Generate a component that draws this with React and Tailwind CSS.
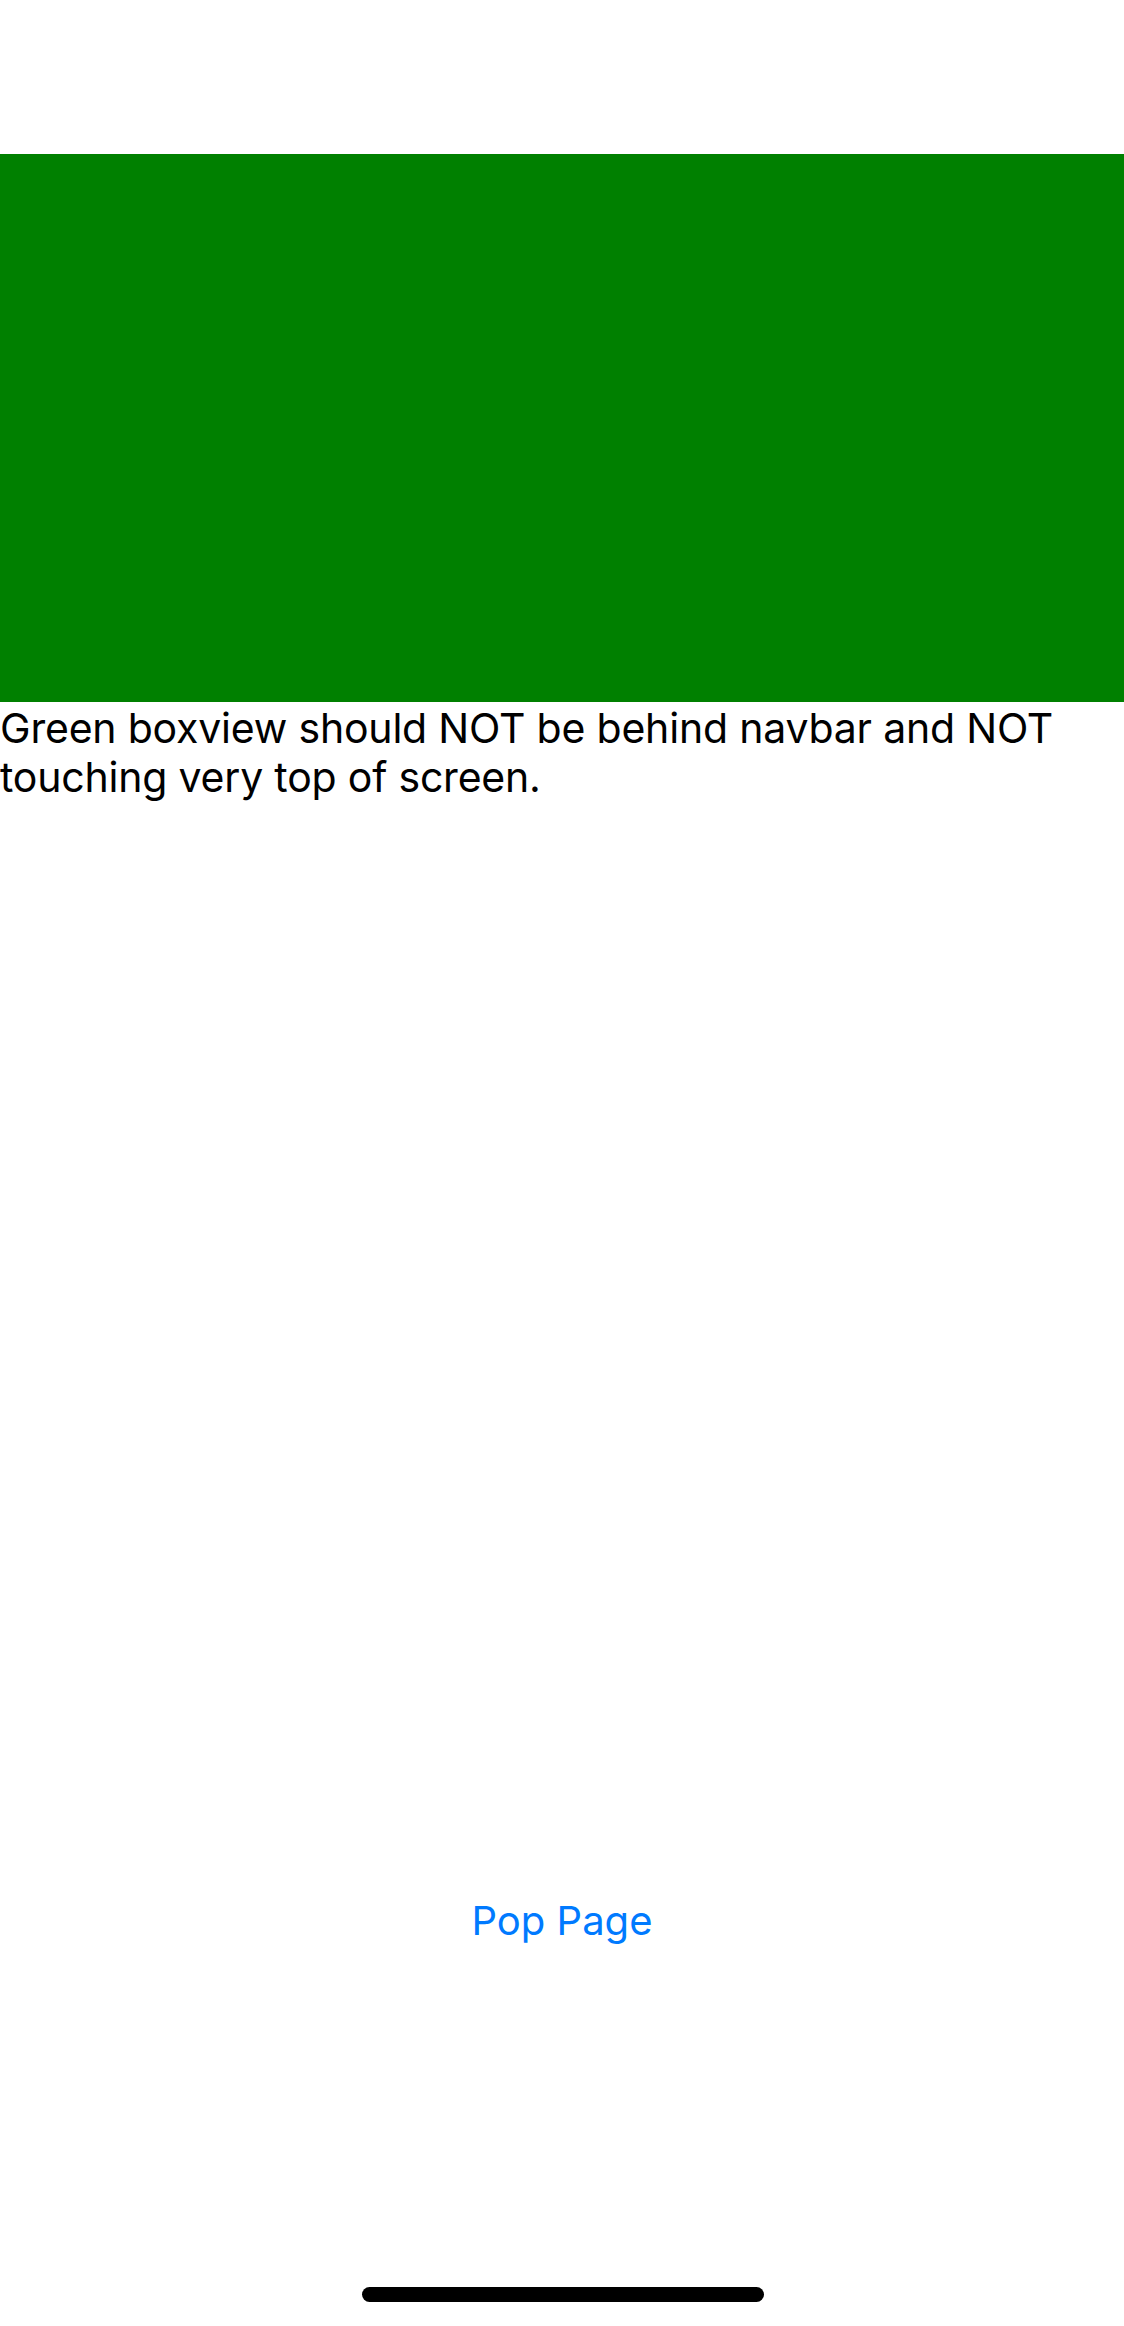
export default function App() {
  return (
    <div className="relative flex h-[2326px] w-[1124px] flex-col bg-white font-['Inter',sans-serif] text-black">
      {/* nav bar area */}
      <div className="h-[154px] shrink-0" />

      <div className="h-[548px] shrink-0 bg-[#008000]" />

      <p className="pt-[2px] text-[41px] leading-[49px] tracking-[-0.2px]">
        Green boxview should NOT be behind navbar and NOT touching very top of screen.
      </p>

      <div className="mt-[1095px] flex justify-center">
        <button className="text-[40px] leading-[48px] text-[#007aff]">Pop Page</button>
      </div>

      {/* home indicator */}
      <div className="absolute bottom-[24px] left-[362px] h-[15px] w-[402px] rounded-full bg-black" />
    </div>
  );
}
